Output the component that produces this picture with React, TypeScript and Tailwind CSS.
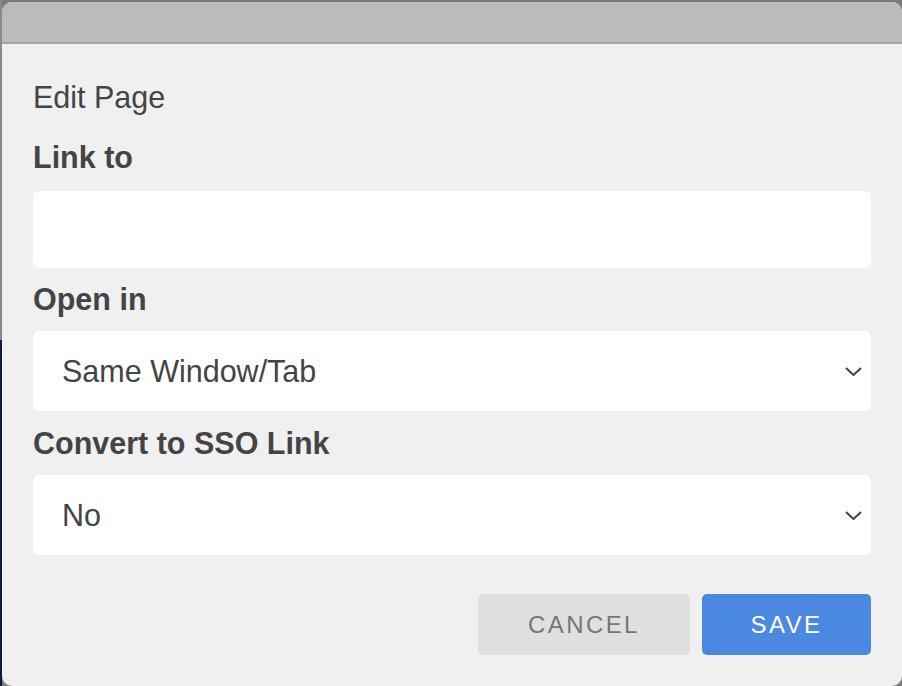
const font = { fontFamily: '"Liberation Sans", Arial, sans-serif' };

const SelectBox = ({ value }: { value: string }) => (
  <div className="flex items-center justify-between h-[80px] rounded-[6px] bg-white pl-[29px] pr-[8px]">
    <span className="text-[30.5px] leading-[34px] text-[#444444]">{value}</span>
    <svg width="17" height="9" viewBox="0 0 17 9" className="mr-[1px]">
      <polyline points="1,1 8.5,8 16,1" fill="none" stroke="#444444" strokeWidth="2" />
    </svg>
  </div>
);

export default function App() {
  return (
    <div className="flex w-[902px] h-[686px] bg-[#7a7a7e] overflow-hidden" style={font}>
      {/* backdrop edge */}
      <div className="flex flex-col w-[2px] shrink-0">
        <div className="h-[340px] bg-[#8a8a8e]" />
        <div className="flex-1 bg-[#0d1b45]" />
      </div>

      <div className="flex flex-col w-[900px] mt-[2px] h-[684px] rounded-[10px] overflow-hidden bg-[#f0f0f0]">
        <div className="h-[40px] shrink-0 bg-[#bbbbbb] border-b-2 border-[#a3a3a3] box-content" />

        <div className="flex flex-col px-[31px] pt-[35px]">
          <h1 className="text-[30.5px] leading-[36px] text-[#444444] font-normal">Edit Page</h1>

          <label className="mt-[24px] text-[30.5px] leading-[36px] font-bold text-[#444444]">Link to</label>
          <div className="mt-[16px] h-[77px] rounded-[6px] bg-white" />

          <label className="mt-[13px] text-[30.5px] leading-[36px] font-bold text-[#444444]">Open in</label>
          <div className="mt-[14px]">
            <SelectBox value="Same Window/Tab" />
          </div>

          <label className="mt-[14px] text-[30.5px] leading-[36px] font-bold text-[#444444]">
            Convert to SSO Link
          </label>
          <div className="mt-[14px]">
            <SelectBox value="No" />
          </div>

          <div className="flex justify-end gap-[12px] mt-[39px]">
            <button className="w-[212px] h-[61px] rounded-[5px] bg-[#e0e0e0] text-[24px] tracking-[0.1em] text-[#777777]">
              CANCEL
            </button>
            <button className="w-[169px] h-[61px] rounded-[5px] bg-[#4b88df] text-[24px] tracking-[0.1em] text-white">
              SAVE
            </button>
          </div>
        </div>
      </div>
    </div>
  );
}
